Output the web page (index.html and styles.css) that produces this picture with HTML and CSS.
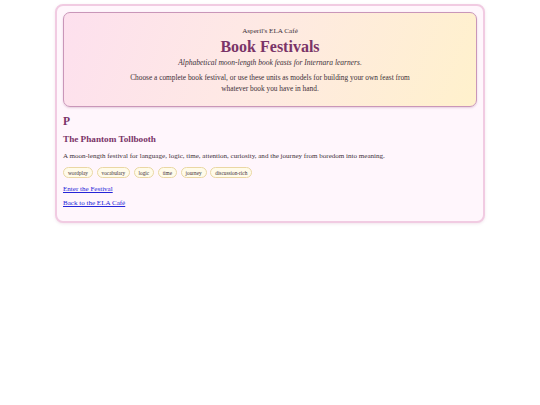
FILE: index.html
```html
<!DOCTYPE html>
<html lang="en">
<head>
<meta charset="utf-8">
<title>Book Festivals</title>
<link rel="stylesheet" href="styles.css">
</head>
<body>
<main class="page">
  <header class="hero">
    <p class="brand">Asperil's ELA Café</p>
    <h1 class="title">Book Festivals</h1>
    <p class="tagline">Alphabetical moon-length book feasts for Internara learners.</p>
    <p class="intro">Choose a complete book festival, or use these units as models for building your own feast from whatever book you have in hand.</p>
  </header>
  <section class="letter">
    <h2 class="letter-head">P</h2>
    <article class="festival">
      <h3 class="festival-title">The Phantom Tollbooth</h3>
      <p class="festival-desc">A moon-length festival for language, logic, time, attention, curiosity, and the journey from boredom into meaning.</p>
      <ul class="tags">
        <li class="tag">wordplay</li>
        <li class="tag">vocabulary</li>
        <li class="tag">logic</li>
        <li class="tag">time</li>
        <li class="tag">journey</li>
        <li class="tag">discussion-rich</li>
      </ul>
      <p class="link-row"><a href="#" class="link">Enter the Festival</a></p>
    </article>
  </section>
  <p class="link-row back"><a href="#" class="link">Back to the ELA Café</a></p>
</main>
</body>
</html>
```

FILE: styles.css
```css
html, body {
  margin: 0;
  padding: 0;
  background: #ffffff;
}
body {
  padding: 4px 0;
  font-family: "Liberation Serif", "DejaVu Serif", serif;
  color: #3d3038;
}
.page {
  width: 430px;
  box-sizing: border-box;
  margin: 0 auto;
  background: #fff6fc;
  border: 2px solid #f1cbe2;
  border-radius: 8px;
  padding: 6px 6px 13px;
  box-shadow: 0 1px 3px rgba(200, 150, 180, 0.25);
}
.hero {
  border: 1px solid #c996b9;
  border-radius: 7px;
  background: linear-gradient(110deg, #fde0ee 0%, #fee9e4 45%, #fff1cc 100%);
  text-align: center;
  padding: 13px 20px 12px;
  box-shadow: 0 1px 2px rgba(170, 110, 150, 0.3);
}
.brand {
  margin: 0;
  font-size: 7.15px;
  line-height: 10px;
}
.title {
  margin: 2px 0 0;
  font-size: 16px;
  line-height: 18px;
  font-weight: bold;
  color: #7a3468;
}
.tagline {
  margin: 2px 0 0;
  font-size: 7.5px;
  line-height: 10px;
  font-style: italic;
}
.intro {
  margin: 4px auto 0;
  max-width: 300px;
  font-size: 7.35px;
  line-height: 11px;
}
.letter-head {
  margin: 8px 0 0;
  font-size: 11.5px;
  line-height: 13px;
  font-weight: bold;
  color: #7a3468;
}
.festival-title {
  margin: 5px 0 0;
  font-size: 9.2px;
  line-height: 12px;
  font-weight: bold;
  color: #7a3468;
}
.festival-desc {
  margin: 6px 0 0;
  font-size: 7.05px;
  line-height: 10px;
}
.tags {
  list-style: none;
  margin: 6px 0 0;
  padding: 0;
  display: flex;
  flex-wrap: wrap;
  gap: 3.5px;
}
.tag {
  font-size: 5.3px;
  line-height: 8px;
  padding: 0.5px 4px;
  border: 1px solid #ead7a4;
  border-radius: 6px;
  background: #fffbea;
}
.link-row {
  margin: 6px 0 0;
  font-size: 7.05px;
  line-height: 10px;
}
.back {
  margin-top: 4px;
}
.link {
  color: #2525d8;
  text-decoration: underline;
}
```
